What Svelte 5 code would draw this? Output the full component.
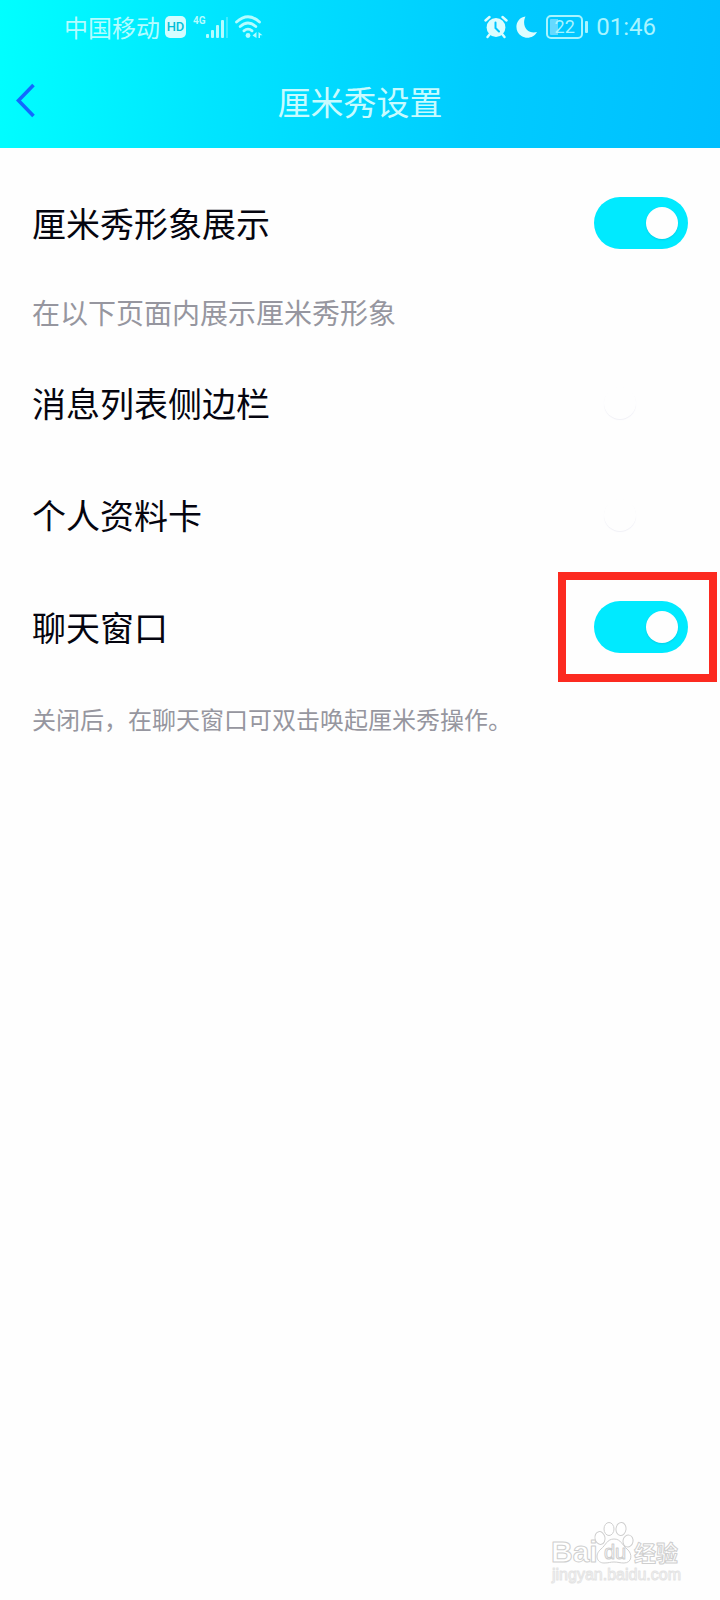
<script>
  let showAvatar = $state(true);
  let pages = $state([
    { id: "sidebar", label: "消息列表侧边栏", on: false, marked: false },
    { id: "profile", label: "个人资料卡", on: false, marked: false },
    { id: "chat", label: "聊天窗口", on: true, marked: true },
  ]);
</script>

<div class="page">
  <header>
    <div class="status">
      <div class="status-group left">
        <span class="carrier">中国移动</span>
        <span class="hd">HD</span>
        <div class="signal">
          <span class="network">4G</span>
          <svg width="24" height="24" viewBox="0 0 24 24" aria-hidden="true">
            <g fill="currentColor">
              <rect x="0" y="19" width="3" height="4" rx="1" />
              <rect x="5" y="15" width="3" height="8" rx="1" />
              <rect x="10" y="10" width="3" height="13" rx="1" />
              <rect x="15" y="5" width="3" height="18" rx="1" />
              <rect x="20" y="2" width="2" height="21" opacity="0.35" />
            </g>
          </svg>
        </div>
        <svg width="28" height="24" viewBox="0 0 28 24" aria-hidden="true">
          <g fill="none" stroke="currentColor" stroke-width="2.8" stroke-linecap="round">
            <path d="M1.5 7Q13 -3.500 24.500 7" />
            <path d="M5.2 11.500Q13 4.600 20.800 11.500" />
            <path d="M8.9 15.800Q13 12.400 17.100 15.800" />
          </g>
          <circle cx="13" cy="20.5" r="2.4" fill="currentColor" />
          <path d="M21.5 17v6l-4-2.500zM23.500 17l4 3.200h-2.500V23h-1.500z" fill="currentColor" />
        </svg>
      </div>
      <div class="status-group right">
        <svg class="solid" width="24" height="24" viewBox="0 0 24 24" aria-hidden="true">
          <circle cx="12" cy="12.5" r="9.4" fill="currentColor" />
          <path d="M1.5 5.5L5.5 2M22.5 5.5L18.5 2M5.5 19.5L3.5 22M18.5 19.5L20.5 22" stroke="currentColor" stroke-width="2.4" stroke-linecap="round" />
          <path d="M11.5 7.5V13L15 16.5" fill="none" stroke="#00c6ff" stroke-width="2" stroke-linecap="round" />
        </svg>
        <svg class="solid" width="22" height="24" viewBox="0 0 22 24" aria-hidden="true">
          <path d="M9.5 1.5C-1 3 -2.5 16 5.5 21C11 24.5 18 22.5 21 17C12 19.5 5 11 9.5 1.5z" fill="currentColor" />
        </svg>
        <div class="battery">22</div>
        <time>01:46</time>
      </div>
    </div>
    <nav>
      <button class="back" aria-label="返回">
        <svg width="20" height="36" viewBox="0 0 20 36" aria-hidden="true">
          <path d="M17.5 2L2.5 17.5L17.5 33" fill="none" stroke="#1268ff" stroke-width="3.6" />
        </svg>
      </button>
      <h1>厘米秀设置</h1>
    </nav>
  </header>

  <main>
    <div class="row">
      <label for="avatar">厘米秀形象展示</label>
      <span class="switch">
        <input id="avatar" type="checkbox" bind:checked={showAvatar} />
      </span>
    </div>
    <p class="section">在以下页面内展示厘米秀形象</p>
    {#each pages as item (item.id)}
      <div class="row">
        <label for={item.id}>{item.label}</label>
        <span class="switch" class:marked={item.marked}>
          <input id={item.id} type="checkbox" bind:checked={item.on} />
        </span>
      </div>
    {/each}
    <p class="hint">关闭后，在聊天窗口可双击唤起厘米秀操作。</p>
  </main>

  <footer>
    <svg width="132" height="66" viewBox="0 0 132 66" role="img" aria-label="Baidu 经验">
      <g fill="#fff" stroke="#cfcfcf" stroke-width="1" stroke-linejoin="round">
        <text class="brand" x="1" y="42">Bai</text>
        <ellipse cx="50" cy="18" rx="5" ry="6.5" transform="rotate(-12 50 18)" />
        <ellipse cx="59" cy="9" rx="5" ry="6.5" />
        <ellipse cx="71" cy="9" rx="5" ry="6.5" transform="rotate(8 71 9)" />
        <ellipse cx="78" cy="21" rx="5" ry="6" transform="rotate(12 78 21)" />
        <path d="M64 19C57 19 56 25 51 29C44 35 47 43 54 43C59 43 60 42 64 42C68 42 70 43 74 43C82 43 83 34 77 29C72 25 71 19 64 19z" />
        <text class="du" x="54" y="39">du</text>
        <text class="exp" x="84" y="41">经验</text>
        <text class="url" x="2" y="60">jingyan.baidu.com</text>
      </g>
    </svg>
  </footer>
</div>

<style>
  :global(body) {
    margin: 0;
    background: #fefefe;
  }
  .page {
    display: flex;
    flex-direction: column;
    min-height: 100vh;
    font-family: "Noto Sans CJK SC", sans-serif;
    color: #05050f;
  }
  header {
    background: linear-gradient(96deg, #00ffff 0%, #00e5ff 30%, #00ccff 66%, #00bfff 100%);
    color: #c8fbff;
  }
  .status {
    display: flex;
    justify-content: space-between;
    align-items: center;
    height: 54px;
    padding: 0 64px;
  }
  .status-group {
    display: flex;
    align-items: center;
  }
  .left {
    gap: 5px;
    color: #b4fcff;
  }
  .right {
    gap: 8px;
    color: #a8f4ff;
  }
  .solid {
    color: #dcfdff;
  }
  .carrier {
    font-size: 24px;
    line-height: 36px;
  }
  .hd {
    width: 21px;
    border-radius: 5px;
    background: #d4fdff;
    color: #00bfd8;
    font: 500 13px/22px Roboto, sans-serif;
    text-align: center;
  }
  .signal {
    display: flex;
    align-items: flex-start;
    margin-left: 2px;
  }
  .network {
    font: 700 10px/12px Roboto, sans-serif;
  }
  .battery {
    position: relative;
    box-sizing: border-box;
    width: 37px;
    height: 24px;
    margin-right: 5px;
    border: 2px solid currentColor;
    border-radius: 5px;
    background: linear-gradient(90deg, #66d9ff 8px, transparent 8px) content-box;
    padding: 2px;
    font: 18px/16px Roboto, sans-serif;
    text-align: center;
  }
  .battery::after {
    content: "";
    position: absolute;
    top: 4px;
    right: -7px;
    width: 3px;
    height: 12px;
    border-radius: 1px;
    background: currentColor;
  }
  time {
    font: 24px/28px Roboto, sans-serif;
  }
  nav {
    display: grid;
    grid-template-columns: 56px 1fr 56px;
    align-items: center;
    height: 94px;
  }
  .back {
    display: flex;
    padding: 0 16px;
    border: 0;
    background: none;
    cursor: pointer;
  }
  h1 {
    margin: 0;
    font-size: 33px;
    font-weight: 400;
    line-height: 48px;
    text-align: center;
  }
  main {
    padding: 19px 32px 0;
  }
  .row {
    display: flex;
    justify-content: space-between;
    align-items: center;
    height: 112px;
  }
  label {
    font-size: 34px;
    line-height: 48px;
  }
  p {
    margin: 0;
    color: #96969f;
  }
  .section {
    padding-bottom: 2px;
    font-size: 28px;
    line-height: 66px;
  }
  .hint {
    font-size: 24px;
    line-height: 72px;
  }
  .switch {
    position: relative;
    display: flex;
  }
  input {
    appearance: none;
    width: 94px;
    height: 52px;
    margin: 0;
    padding: 10px;
    border-radius: 26px;
    cursor: pointer;
  }
  input::before {
    content: "";
    display: block;
    width: 32px;
    height: 32px;
    border-radius: 50%;
    background: #fefefe;
    box-shadow: 0 1px 1px #f0f0f6;
  }
  input:checked {
    background: #00eaff;
  }
  input:checked::before {
    margin-left: auto;
    box-shadow: 0 1px 2px #00cfe8;
  }
  /* red frame drawn round the highlighted switch */
  .marked::after {
    content: "";
    position: absolute;
    inset: -29px -29px -29px -36px;
    border: 8px solid #fc2a20;
    pointer-events: none;
  }
  footer {
    display: flex;
    justify-content: flex-end;
    margin-top: auto;
    padding: 0 38px 14px;
  }
  .brand {
    font: 700 30px "Liberation Sans", sans-serif;
  }
  .du {
    font: 20px "Liberation Sans", sans-serif;
  }
  .exp {
    font: 700 22px "Noto Sans CJK SC", sans-serif;
  }
  .url {
    font: 16px "Liberation Sans", sans-serif;
    stroke: #e4e4e4;
  }
</style>
